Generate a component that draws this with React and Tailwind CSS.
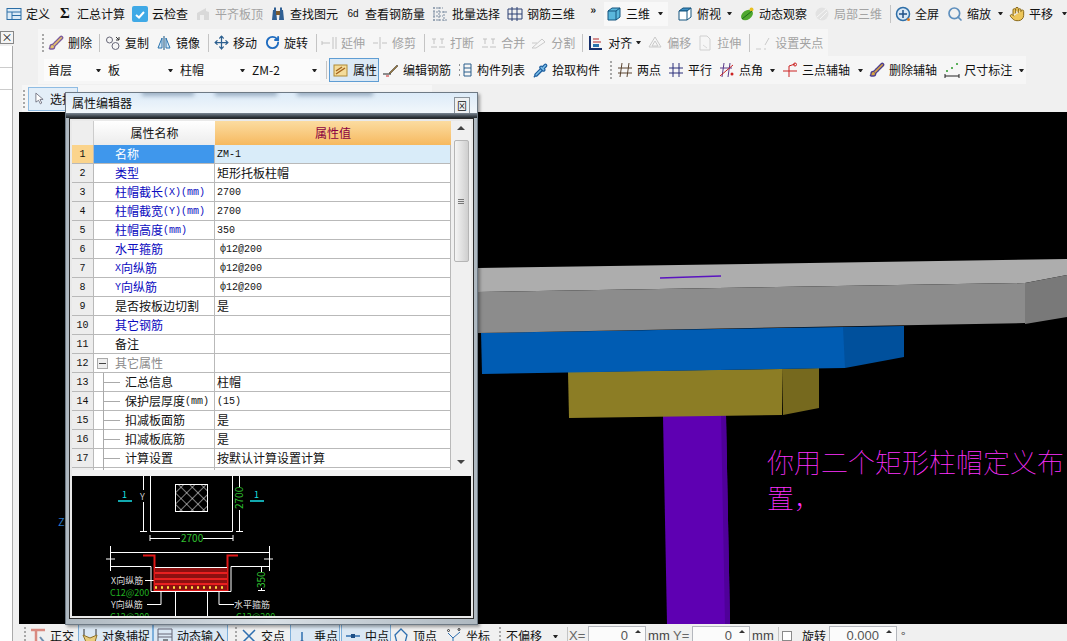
import React from 'react';
import { Brush, Move, RotateCw, Hand, Search, Pipette } from 'lucide-react';

const Ic = ({ children, className = '' }) => (
  <svg viewBox="0 0 16 16" className={`w-4 h-4 shrink-0 ${className}`} fill="none">{children}</svg>
);

const Tool = ({ icon, label, gray, className = '' }) => (
  <div className={`flex items-center gap-1 shrink-0 whitespace-nowrap ${gray ? 'text-[#a3a3a3]' : 'text-[#111]'} ${className}`}>
    <span className={`w-4 h-4 flex items-center justify-center shrink-0 ${gray ? 'opacity-40 grayscale' : ''}`}>{icon}</span>
    <span>{label}</span>
  </div>
);

const Arrow = ({ className = '' }) => (
  <span className={`w-[5px] h-0 shrink-0 border-x-[2.5px] border-x-transparent border-t-[3px] border-t-[#222] ${className}`} />
);
const Sep = ({ className = '' }) => <span className={`w-px h-[18px] bg-[#c4c4c4] shrink-0 ${className}`} />;
const Grip = ({ className = '' }) => <span className={`w-[2px] h-[18px] shrink-0 border-l-2 border-dotted border-[#a8a8a8] ${className}`} />;

const Combo = ({ label, className = 'w-[72px]' }) => (
  <div className={`h-[22px] flex items-center justify-between pl-1 pr-[3px] bg-[#fbfbfb] shrink-0 ${className}`}>
    <span>{label}</span>
    <Arrow />
  </div>
);

const iconDefine = <Ic><rect x="1" y="2.5" width="14" height="11" fill="#dcebf7" stroke="#2c6ea6" /><path d="M1 6h14M6 6v7.5M6 9.5h9" stroke="#2c6ea6" /></Ic>;
const iconCloud = <Ic><rect width="16" height="16" rx="2" fill="#3fa9e6" /><path d="M4 9l3 2.5L12 6" stroke="#fff" strokeWidth="2" /></Ic>;
const iconAlign = <Ic><path d="M2 14V7l9-5v3l3 1v8z" fill="#b9b9b9" /><path d="M5 14V9h4v5" fill="#eee" /></Ic>;
const iconBino = <Ic><path d="M2 14l1-10h3l1 10zM9 14l1-10h3l1 10z" fill="#2f5f93" /><rect x="6" y="5" width="4" height="4" fill="#7b5a2f" /><rect x="4" y="1.5" width="2" height="3" fill="#2f5f93" /><rect x="10" y="1.5" width="2" height="3" fill="#2f5f93" /></Ic>;
const iconSel = <Ic><path d="M1 2h10M1 6h14M1 10h10M1 14h14M2 1v14M7 1v14M12 5v10" stroke="#7d8da1" strokeDasharray="2 1" /></Ic>;
const iconBars = <Ic><path d="M1 3h14v10H1zM1 8h14M5 1v14M10 1v14" stroke="#2b3f73" /></Ic>;
const iconCube = <Ic><path d="M2 5l4-3h8v9l-4 3H2z" fill="#5ab7dc" stroke="#14557f" /><path d="M2 5h8v9M10 5l4-3" stroke="#14557f" /></Ic>;
const iconCubeTop = <Ic><path d="M2 5l4-3h8L10 5z" fill="#3d8fc4" stroke="#14557f" /><path d="M2 5h8v9H2zM10 5l4-3v9l-4 3" fill="#fff" stroke="#14557f" /></Ic>;
const iconOrbit = <Ic><ellipse cx="8" cy="9" rx="6.5" ry="4.5" transform="rotate(-35 8 9)" fill="#4fa82f" /><circle cx="12.5" cy="3.5" r="2" fill="#e8c020" /><path d="M3 13L13 5" stroke="#1f6a1a" /></Ic>;
const iconPart = <Ic><circle cx="8" cy="8" r="6.5" fill="#cfcfcf" /><path d="M3 11L12 3M6 13l7-7" stroke="#fff" /></Ic>;
const iconFull = <Ic><circle cx="8" cy="8" r="6.5" fill="#dbe8f5" stroke="#2f6fa8" strokeWidth="1.5" /><path d="M8 4v8M4 8h8" stroke="#1f4f86" strokeWidth="1.5" /><circle cx="13.5" cy="13.5" r="1.5" fill="#e07a20" /></Ic>;
const iconZoom = <Search size={16} color="#5e8fbd" strokeWidth={2.5} />;
const iconPan = <Hand size={16} color="#8a6a1c" fill="#edc65a" strokeWidth={1.5} />;
const iconDel = <Brush size={16} color="#7a5a9c" fill="#e9c46a" />;
const iconCopy = <Ic><circle cx="4.5" cy="5" r="3" stroke="#667" /><circle cx="10.5" cy="11" r="3.5" stroke="#667" /><path d="M11 2l3 3M14 2v3h-3" stroke="#333" /></Ic>;
const iconMirror = <Ic><path d="M8 1v14" stroke="#15507f" /><path d="M6 3v10H2zM10 3v10h4z" stroke="#2a73ad" fill="#d6e8f6" /></Ic>;
const iconMove = <Move size={15} color="#2c5f8f" strokeWidth={2} />;
const iconRot = <RotateCw size={15} color="#1f6cc0" strokeWidth={3} />;
const iconExt = <Ic><path d="M1 8h8M1 6v4M12 2v12M15 2v12" stroke="#777" /></Ic>;
const iconTrim = <Ic><path d="M1 8h5M10 8h5M8 2v12" stroke="#777" /></Ic>;
const iconBreak = <Ic><path d="M1 12h6M9 12h6M4 4v5M12 4v5M2 4h4M10 4h4" stroke="#777" /></Ic>;
const iconSplit = <Ic><path d="M1 13l10-9 3 3-9 6z" stroke="#888" /><path d="M1 8h5" stroke="#888" /></Ic>;
const iconAlignL = <Ic><path d="M2 1v14M2 14h12" stroke="#162f6b" strokeWidth="2" /><path d="M5 4h6M5 7h8" stroke="#b32828" /><rect x="5" y="9" width="6" height="3" fill="#2a73ad" /></Ic>;
const iconOffset = <Ic><path d="M8 2l6 10H2zM8 6l3 5H5z" stroke="#888" /></Ic>;
const iconStretch = <Ic><path d="M3 1h7l3 3v11H3z" stroke="#999" /><path d="M6 10l4 3" stroke="#aaa" /></Ic>;
const iconGrip = <Ic><path d="M1 14h5M9 14h2M10 10l4-7" stroke="#888" /></Ic>;
const iconProp = <Ic><rect x="1" y="3" width="13" height="11" fill="#f4dc9a" stroke="#b08a35" /><path d="M3 12l9-6M3 9l6-4" stroke="#a4641f" strokeWidth="1.5" /></Ic>;
const iconEdit = <Ic><path d="M0 12h8" stroke="#222" /><path d="M6 11l8-8 1 1-8 8z" fill="#9c7a3c" stroke="#333" strokeWidth=".5" /><path d="M3 14h3" stroke="#c22" /></Ic>;
const iconList = <Ic><path d="M7 2h7v12H7zM7 6h7M7 10h7" stroke="#2b5f8c" /><path d="M2 3h2M2 8h2M2 13h2" stroke="#333" strokeDasharray="1 1" /></Ic>;
const iconPick = <Pipette size={15} color="#1f5f9f" fill="#7cc0ea" />;
const axisA = <Ic><path d="M5 1L3 15M12 1l-2 14M1 6h14M1 11h14" stroke="#5c4632" /></Ic>;
const axisB = <Ic><path d="M5 1v14M11 1v14M1 6h14M1 11h14" stroke="#2b2f7b" /></Ic>;
const axisC = <Ic><path d="M5 1L3 15M11 1L9 15M1 6h12" stroke="#5a3a8a" /><path d="M1 14L14 3" stroke="#c22" /><circle cx="13" cy="12" r="1.5" fill="#c22" /></Ic>;
const axisD = <Ic><path d="M1 9h14M7 15V4M7 4l6-2" stroke="#c22" /><circle cx="13" cy="2.5" r="1.5" stroke="#c22" /></Ic>;
const iconDelAxis = <Brush size={16} color="#4c3f8f" fill="#d9a441" />;
const iconDim = <Ic><path d="M1 14h14M1 12v4M15 12v4" stroke="#222" /><circle cx="3" cy="9" r="1" fill="#2a9a2a" /><circle cx="8" cy="6" r="1" fill="#2a9a2a" /><circle cx="13" cy="2" r="1" fill="#2a9a2a" /></Ic>;
const iconOrtho = <Ic><path d="M1 2h14M6 2v13" stroke="#d98a80" strokeWidth="2.5" /><path d="M10 9l4 5" stroke="#6f8fb0" strokeWidth="2" /></Ic>;
const iconSnap = <Ic><path d="M2 1v6M14 1v6" stroke="#333" /><path d="M1 7l7 3 7-3-2 7H4z" fill="#e9cd7d" stroke="#8c6f28" /></Ic>;
const iconInput = <Ic><path d="M1 1h14v5H1zM1 6v7M15 6v7M1 9h14" stroke="#667" /><path d="M6 12h5" stroke="#222" /></Ic>;
const iconCross = <Ic><path d="M2 2l12 12M14 2L2 14" stroke="#2f6fb0" strokeWidth="1.5" /></Ic>;
const iconPerp = <Ic><path d="M0 14h15M8 4v10" stroke="#2f6fb0" strokeWidth="1.5" /><rect x="6.5" y="12.5" width="3" height="3" fill="#1f4f86" /></Ic>;
const iconMid = <Ic><path d="M1 8h14" stroke="#2f6fb0" strokeWidth="1.5" /><rect x="6" y="6" width="4" height="4" fill="#1f4f86" /></Ic>;
const iconVertex = <Ic><path d="M8 1l6 6-2 8H4L2 7z" stroke="#2f6fb0" strokeWidth="1.3" /></Ic>;
const iconCoord = <Ic><path d="M2 5l5 5 7-6M7 10v5" stroke="#2f6fb0" /><circle cx="2.5" cy="2.5" r="1" stroke="#333" /><circle cx="13" cy="1.5" r="1" stroke="#333" /></Ic>;

const Toggle = ({ icon, label, className = '' }) => (
  <div className={`h-full flex items-center gap-1 pl-[3px] border border-[#7dafdb] bg-[#dbe8f4] shrink-0 whitespace-nowrap ${className}`}>
    <span className="w-4 h-4 flex items-center justify-center shrink-0">{icon}</span>
    <span>{label}</span>
  </div>
);

const Spin = ({ value, className = '' }) => (
  <div className={`relative h-5 border border-[#b4b7bd] bg-[#fbfbfb] flex items-center justify-end pr-[17px] text-[#555] shrink-0 font-['Liberation_Sans',sans-serif] text-[13px] ${className}`}>
    {value}
    <span className="absolute right-[4px] top-[3px] w-0 h-0 border-x-[3px] border-x-transparent border-b-[3px] border-b-[#333]" />
  </div>
);

const Lat = ({ children }) => <span className="font-['Liberation_Mono',monospace] text-[10px]">{children}</span>;
const Rebar = () => <span className="ml-[3px] font-['Liberation_Mono',monospace] text-[10px]">ф12@200</span>;

const rows = [
  { n: 1, name: '名称', value: <Lat>ZM-1</Lat>, active: true },
  { n: 2, name: '类型', value: '矩形托板柱帽', blue: true },
  { n: 3, name: <>柱帽截长<Lat>(X)(mm)</Lat></>, value: <Lat>2700</Lat>, blue: true },
  { n: 4, name: <>柱帽截宽<Lat>(Y)(mm)</Lat></>, value: <Lat>2700</Lat>, blue: true },
  { n: 5, name: <>柱帽高度<Lat>(mm)</Lat></>, value: <Lat>350</Lat>, blue: true },
  { n: 6, name: '水平箍筋', value: <Rebar />, blue: true },
  { n: 7, name: <><Lat>X</Lat>向纵筋</>, value: <Rebar />, blue: true },
  { n: 8, name: <><Lat>Y</Lat>向纵筋</>, value: <Rebar />, blue: true },
  { n: 9, name: '是否按板边切割', value: '是' },
  { n: 10, name: '其它钢筋', value: '', blue: true },
  { n: 11, name: '备注', value: '' },
  { n: 12, name: '其它属性', value: '', group: true },
  { n: 13, name: '汇总信息', value: '柱帽', child: true },
  { n: 14, name: <>保护层厚度<Lat>(mm)</Lat></>, value: <Lat>(15)</Lat>, child: true },
  { n: 15, name: '扣减板面筋', value: '是', child: true },
  { n: 16, name: '扣减板底筋', value: '是', child: true },
  { n: 17, name: '计算设置', value: '按默认计算设置计算', child: true },
  { n: '', name: '', value: '', child: true },
];

const Row = ({ r }) => (
  <div className="flex h-[19px] shrink-0">
    <div className={`w-[22px] flex items-center justify-center border-b border-r border-[#b9b9b9] font-['Liberation_Mono',monospace] text-[10px] ${r.active ? 'bg-[#fbd48c]' : 'bg-[#ededed]'}`}>{r.n}</div>
    <div className={`relative w-[121px] flex items-center whitespace-nowrap border-b border-r border-[#b9b9b9] ${r.child ? 'pl-[31px]' : 'pl-[21px]'} ${r.active ? 'bg-[#3f97ec] text-white' : r.blue ? 'text-[#0a0ac0] bg-white' : r.group ? 'text-[#8a8a8a] bg-white' : 'bg-white'}`}>
      {r.group && (
        <span className="absolute left-[3px] top-[4px] w-[11px] h-[11px] border border-[#aaa] bg-[#eee] flex items-center justify-center">
          <span className="w-[7px] h-px bg-[#444]" />
        </span>
      )}
      {r.child && <span className="absolute left-[9px] top-0 w-px h-[19px] bg-[#aaa]" />}
      {r.child && <span className="absolute left-[10px] top-[9px] w-[16px] h-px bg-[#aaa]" />}
      {r.name}
    </div>
    <div className={`w-[236px] flex items-center pl-[2px] border-b border-r border-[#b9b9b9] whitespace-nowrap ${r.active ? 'bg-[#d9ecf9]' : 'bg-white'}`}>{r.value}</div>
  </div>
);

const PropGrid = () => (
  <div className="flex h-[349px] shrink-0 overflow-hidden">
    <div className="w-[379px] flex flex-col overflow-hidden">
      <div className="flex h-[24px] shrink-0">
        <div className="w-[22px] bg-[#eeeeee] border-r border-[#ccc]" />
        <div className="w-[121px] flex items-center justify-center bg-gradient-to-b from-white to-[#ececec]">属性名称</div>
        <div className="w-[236px] flex items-center justify-center bg-gradient-to-b from-[#fbdca0] to-[#f6b95e] text-[#8a0040]">属性值</div>
      </div>
      {rows.map((r, i) => <Row key={i} r={r} />)}
    </div>
    <div className="relative w-[20px] bg-[#f0f0f0] flex flex-col items-center">
      <span className="mt-[5px] w-0 h-0 border-x-[4px] border-x-transparent border-b-[4px] border-b-[#444]" />
      <div className="mt-[10px] w-[15px] h-[122px] border border-[#b5b5b5] rounded-[2px] bg-gradient-to-r from-[#f4f4f4] to-[#cfcfcf] flex flex-col items-center justify-center gap-[1px]">
        <span className="w-[6px] h-px bg-[#777]" />
        <span className="w-[6px] h-px bg-[#777]" />
        <span className="w-[6px] h-px bg-[#777]" />
      </div>
      <span className="absolute bottom-[6px] w-0 h-0 border-x-[4px] border-x-transparent border-t-[4px] border-t-[#444]" />
    </div>
  </div>
);

const Preview = () => (
  <svg viewBox="72 476 399 140" className="w-[399px] h-[140px] bg-black shrink-0" style={{ fontFamily: '"Noto Sans CJK SC", sans-serif' }}>
    <defs>
      <pattern id="hatch" width="8" height="8" patternUnits="userSpaceOnUse" patternTransform="rotate(45)">
        <path d="M0 0H8M0 0V8" stroke="#fff" />
      </pattern>
    </defs>
    <g stroke="#fff" fill="none">
      <path d="M150.5 476V531.5H232.5V476" />
      <path d="M143.5 476V490M143.500 502V531M140 531.5H147" />
      <path d="M239.500 476V487M239.500 510V531M236 531.5H243" />
      <rect x="175.5" y="484.5" width="32" height="27" fill="url(#hatch)" />
      <path d="M150 538.5H180M203 538.5H233M150 535v6M233 535v6" />
      <path d="M110.5 546V571M269.5 546V571M110 552.5H270M110 566.5H151M231 566.5H270" />
      <path d="M106 559h9M264 559h9" />
      <path d="M151 566.5V591.5H231V566.5" />
      <path d="M175.5 591V616M207.5 591V616" />
      <path d="M145 580.5H154M147 604.5H161V587M234 604.5H219V585" />
      <path d="M261.5 566V572M261.500 588V590M258 590.5h7" />
    </g>
    <path d="M143 555.5H154.5V590H227.5V555.5H238" stroke="#e01818" strokeWidth="2" fill="none" />
    <rect x="155" y="567" width="72" height="23" fill="#8c1010" />
    <path d="M155 567.5H227" stroke="#fff" />
    <path d="M155 573H227M155 579H227M155 584H227" stroke="#e82020" strokeWidth="2" />
    <path d="M155 587.5H227" stroke="#ffe040" strokeWidth="2.5" strokeDasharray="2 4" />
    <path d="M118 501h14M250 501h14" stroke="#18e0e8" strokeWidth="1.5" />
    <g fontSize="9">
      <text x="122" y="498" fill="#18e0e8">1</text>
      <text x="254" y="498" fill="#18e0e8">1</text>
      <text x="140" y="500" fill="#ccc">Y</text>
      <text x="181" y="542" fill="#30c030" fontSize="10">2700</text>
      <text x="243" y="509" fill="#30c030" fontSize="10" transform="rotate(-90 243 509)">2700</text>
      <text x="265" y="588" fill="#30c030" fontSize="10" transform="rotate(-90 265 588)">350</text>
      <text x="111" y="584" fill="#ddd">X向纵筋</text>
      <text x="110" y="596" fill="#20b020">C12@200</text>
      <text x="111" y="608" fill="#ddd">Y向纵筋</text>
      <text x="110" y="620" fill="#20b020">C12@200</text>
      <text x="234" y="608" fill="#ddd">水平箍筋</text>
      <text x="236" y="620" fill="#20b020">C12@200</text>
    </g>
  </svg>
);

const Dialog = () => (
  <div className="absolute left-[65px] top-[92px] w-[413px] h-[533px] border border-[#6e7a85] bg-gradient-to-r from-[#aeb8c0] via-[#d8dfe5] to-[#aeb8c0] flex flex-col shadow-[2px_2px_3px_rgba(0,0,0,0.35)]">
    <div className="relative h-[20px] shrink-0 overflow-hidden bg-gradient-to-b from-[#dcebf8] to-[#f2f7fb] flex items-center pl-[6px]">
      <div className="absolute left-[76px] top-[-5px] w-[52px] h-[8px] bg-[#9fb2c6] blur-[2px]" />
      <div className="absolute left-[149px] top-[-5px] w-[62px] h-[8px] bg-[#9fb2c6] blur-[2px]" />
      <div className="absolute left-[231px] top-[-5px] w-[76px] h-[8px] bg-[#9fb2c6] blur-[2px]" />
      <span className="relative">属性编辑器</span>
      <span className="absolute right-[7px] top-[4px] w-[16px] h-[17px] border border-[#8b949c] bg-[#eef1f3] flex items-center justify-center text-[10px] leading-none">⊠</span>
    </div>
    <div className="h-[5px] shrink-0 bg-gradient-to-b from-[#7c8894] to-[#20262b]" />
    <div className="mx-[3px] border border-[#2c2c2c] bg-[#e9e9e9] p-[2px] flex flex-col">
      <PropGrid />
      <div className="h-[6px] shrink-0 bg-[#f2f2f2]" />
      <Preview />
    </div>
  </div>
);

const Scene = () => (
  <svg viewBox="19 112 1048 512" className="w-full h-full block">
    <polygon points="663,416 726,415 730,624 667,624" fill="#5e00b2" />
    <polygon points="721,415 726,415 730,624 725,624" fill="#4f0099" />
    <polygon points="568,372 782,369 782,415 569,418" fill="#8c7d25" />
    <polygon points="782,369 819,368 819,408 783,415" fill="#76691e" />
    <polygon points="481,333 845,327 845,368 482,374" fill="#005cb3" />
    <polygon points="843,327 904,326 904,357 845,368" fill="#00509c" />
    <polygon points="478,268 1067,259 1067,275 1025,283 478,292" fill="#adadad" />
    <polygon points="478,292 1025,283 1025,323 478,333" fill="#8c8c8c" />
    <polygon points="1025,283 1067,275 1067,317 1025,324" fill="#797979" />
    <path d="M660 278L690 277L721 276" stroke="#5a14c0" strokeWidth="1.5" />
  </svg>
);

export default function App() {
  return (
    <div className="relative w-[1067px] h-[641px] overflow-hidden bg-[#f0f0f0] text-[12px] text-[#111] font-['Noto_Sans_CJK_SC','Liberation_Sans',sans-serif]">
      {/* top menu row */}
      <div className="h-[27px] flex items-center">
        <Tool className="ml-[6px]" icon={iconDefine} label="定义" />
        <Tool className="ml-[7px]" icon={<span className="font-['Liberation_Serif',serif] font-bold text-[15px]">Σ</span>} label="汇总计算" />
        <Tool className="ml-[7px]" icon={iconCloud} label="云检查" />
        <Tool className="ml-[7px]" gray icon={iconAlign} label="平齐板顶" />
        <Tool className="ml-[7px]" icon={iconBino} label="查找图元" />
        <Tool className="ml-[7px]" icon={<span className="font-['Liberation_Sans',sans-serif] text-[10px]">6d</span>} label="查看钢筋量" />
        <Tool className="ml-[7px]" icon={iconSel} label="批量选择" />
        <Tool className="ml-[7px]" icon={iconBars} label="钢筋三维" />
        <span className="ml-[15px] w-2 -mt-2 text-[11px] leading-none font-bold">»</span>
        <div className="ml-[8px] h-[24px] flex items-center bg-[#f8f8f8] pl-[2px] pr-[5px]">
          <Tool icon={iconCube} label="三维" />
          <Arrow className="ml-[8px]" />
        </div>
        <Tool className="ml-[9px]" icon={iconCubeTop} label="俯视" />
        <Arrow className="ml-[6px]" />
        <Tool className="ml-[7px]" icon={iconOrbit} label="动态观察" />
        <Tool className="ml-[7px]" gray icon={iconPart} label="局部三维" />
        <Sep className="ml-[8px]" />
        <Tool className="ml-[4px]" icon={iconFull} label="全屏" />
        <Tool className="ml-[8px]" icon={iconZoom} label="缩放" />
        <Arrow className="ml-[7px]" />
        <Tool className="ml-[6px]" icon={iconPan} label="平移" />
        <Arrow className="ml-[9px]" />
      </div>

      <div className="flex">
        {/* left docked panel, mostly hidden */}
        <div className="w-[19px] h-[614px] shrink-0 flex flex-col">
          <div className="mt-[4px] w-[14px] h-[13px] border border-[#888] bg-[#f4f4f4] flex items-center justify-center text-[11px] leading-none">×</div>
          <div className="mt-[2px] w-[13px] flex-1 bg-white border-r border-[#aaa] flex flex-col">
            <div className="h-[22px] border-b border-[#ccc]" />
            <div className="h-[22px] border-b border-[#ccc]" />
          </div>
        </div>

        <div className="w-[1048px] flex flex-col">
          {/* edit toolbar */}
          <div className="h-[27px] mt-[2px] flex">
            <div className="ml-[19px] w-[790px] bg-[#f6f6f6] flex items-center">
              <Grip className="ml-[4px]" />
              <Tool className="ml-[4px]" icon={iconDel} label="删除" />
              <Sep className="ml-[7px]" />
              <Tool className="ml-[5px]" icon={iconCopy} label="复制" />
              <Tool className="ml-[7px]" icon={iconMirror} label="镜像" />
              <Sep className="ml-[8px]" />
              <Tool className="ml-[4px]" icon={iconMove} label="移动" />
              <Tool className="ml-[7px]" icon={iconRot} label="旋转" />
              <Sep className="ml-[8px]" />
              <Tool className="ml-[4px]" gray icon={iconExt} label="延伸" />
              <Tool className="ml-[7px]" gray icon={iconTrim} label="修剪" />
              <Sep className="ml-[8px]" />
              <Tool className="ml-[5px]" gray icon={iconBreak} label="打断" />
              <Tool className="ml-[7px]" gray icon={iconBreak} label="合并" />
              <Tool className="ml-[6px]" gray icon={iconSplit} label="分割" />
              <Sep className="ml-[7px]" />
              <Tool className="ml-[5px]" icon={iconAlignL} label="对齐" />
              <Arrow className="ml-[4px]" />
              <Tool className="ml-[6px]" gray icon={iconOffset} label="偏移" />
              <Tool className="ml-[6px]" gray icon={iconStretch} label="拉伸" />
              <Sep className="ml-[8px]" />
              <Tool className="ml-[5px]" gray icon={iconGrip} label="设置夹点" />
            </div>
          </div>

          {/* layer / component selectors */}
          <div className="h-[28px] flex">
            <div className="ml-[19px] w-[988px] bg-[#f6f6f6] flex items-center">
              <div className="ml-[6px] flex">
                <Combo className="w-[60px]" label="首层" />
                <Combo label="板" />
                <Combo label="柱帽" />
                <Combo label="ZM-2" />
              </div>
              <Sep className="ml-[6px]" />
              <div className="ml-[2px] h-[24px] w-[50px] shrink-0 flex items-center gap-1 pl-[3px] border border-[#5f9dd3] bg-[#dbe9f5]">
                <span className="w-4 h-4 flex items-center justify-center">{iconProp}</span>
                <span>属性</span>
              </div>
              <Tool className="ml-[4px]" icon={iconEdit} label="编辑钢筋" />
              <Tool className="ml-[6px]" icon={iconList} label="构件列表" />
              <Tool className="ml-[7px]" icon={iconPick} label="拾取构件" />
              <Grip className="ml-[10px]" />
              <Tool className="ml-[5px]" icon={axisA} label="两点" />
              <Tool className="ml-[7px]" icon={axisB} label="平行" />
              <Tool className="ml-[7px]" icon={axisC} label="点角" />
              <Arrow className="ml-[7px]" />
              <Tool className="ml-[7px]" icon={axisD} label="三点辅轴" />
              <Arrow className="ml-[8px]" />
              <Tool className="ml-[6px]" icon={iconDelAxis} label="删除辅轴" />
              <Tool className="ml-[7px]" icon={iconDim} label="尺寸标注" />
              <Arrow className="ml-[7px]" />
            </div>
          </div>

          {/* draw toolbar, mostly behind the dialog */}
          <div className="h-[28px] flex">
            <div className="ml-[3px] mt-[1px] w-[410px] bg-[#f6f6f6] flex items-center">
              <Grip className="ml-[1px]" />
              <div className="ml-[3px] h-[24px] w-[50px] border border-[#8fbce3] bg-[#e3eef8] flex items-center gap-[6px] pl-[6px]">
                <svg viewBox="0 0 10 14" className="w-[9px] h-[13px]"><path d="M1 1v10l3-2 2 4 1.5-1-2-4h3.500z" fill="#fff" stroke="#556" strokeWidth=".8" /></svg>
                <span>选择</span>
              </div>
            </div>
          </div>

          <div className="relative h-[512px] bg-black overflow-hidden">
            <Scene />
            <span className="absolute left-[39px] top-[404px] text-[#2b78c8] text-[11px] leading-none">Z</span>
            <p className="absolute left-[748px] top-[332px] w-[300px] text-[27px] leading-[36px] font-thin text-[#ff30ff]">你用二个矩形柱帽定义布置，</p>
          </div>

          {/* snap / status bar, cut off by the window */}
          <div className="h-[24px] flex items-center">
            <Grip className="ml-[5px]" />
            <Tool className="ml-[4px]" icon={iconOrtho} label="正交" />
            <Toggle className="ml-[4px] w-[75px]" icon={iconSnap} label="对象捕捉" />
            <Toggle className="w-[75px]" icon={iconInput} label="动态输入" />
            <Grip className="ml-[7px]" />
            <Tool className="ml-[4px]" icon={iconCross} label="交点" />
            <Toggle className="ml-[5px] w-[50px]" icon={iconPerp} label="垂点" />
            <Toggle className="ml-[1px] w-[50px]" icon={iconMid} label="中点" />
            <Tool className="ml-[2px]" icon={iconVertex} label="顶点" />
            <Tool className="ml-[9px]" icon={iconCoord} label="坐标" />
            <Grip className="ml-[9px]" />
            <span className="ml-[5px] w-[36px] shrink-0">不偏移</span>
            <Arrow className="ml-[11px]" />
            <Sep className="ml-[9px]" />
            <span className="ml-[1px] w-[16px] shrink-0 text-[#666] font-['Liberation_Sans',sans-serif] text-[13px]">X=</span>
            <Spin className="ml-[3px] w-[58px]" value="0" />
            <span className="ml-[2px] w-[20px] shrink-0 text-[#444] font-['Liberation_Sans',sans-serif] text-[13px]">mm</span>
            <span className="ml-[5px] w-[16px] shrink-0 text-[#666] font-['Liberation_Sans',sans-serif] text-[13px]">Y=</span>
            <Spin className="ml-[3px] w-[58px]" value="0" />
            <span className="ml-[2px] w-[20px] shrink-0 text-[#444] font-['Liberation_Sans',sans-serif] text-[13px]">mm</span>
            <Sep className="ml-[6px]" />
            <span className="ml-[3px] w-[10px] h-[10px] shrink-0 border border-[#8a8a8a] bg-white" />
            <span className="ml-[10px] w-[24px] shrink-0">旋转</span>
            <Spin className="ml-[3px] w-[68px]" value="0.000" />
            <span className="ml-[4px] text-[#444]">°</span>
          </div>
        </div>
      </div>

      <Dialog />
    </div>
  );
}
